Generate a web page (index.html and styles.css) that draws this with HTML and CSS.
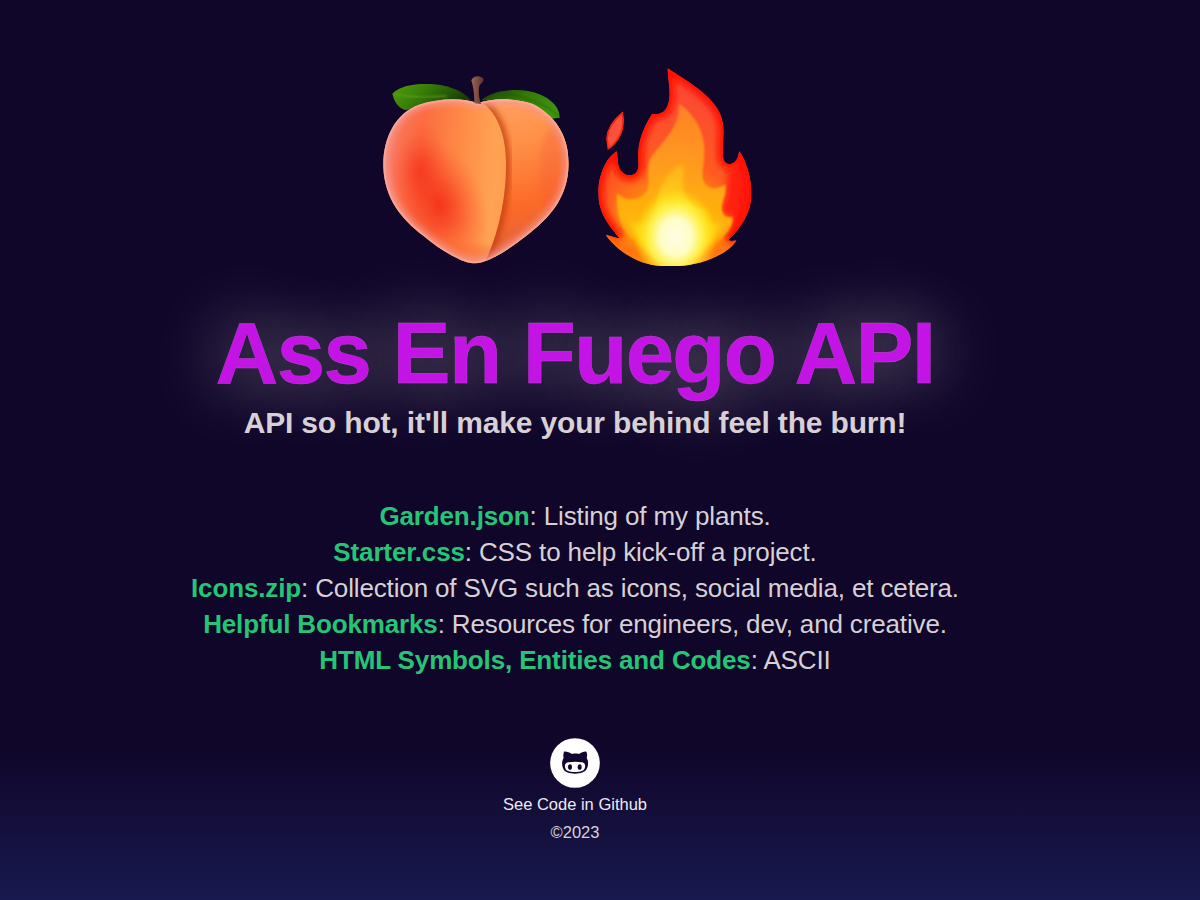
FILE: index.html
```html
<!DOCTYPE html>
<html lang="en">
<head>
<meta charset="utf-8">
<title>Ass En Fuego API</title>
<link rel="stylesheet" href="styles.css">
</head>
<body>
<main class="page">
  <svg class="hero" viewBox="0 0 1230 660" role="img" aria-label="Peach and fire">
    <defs>
      <linearGradient id="skin" x1="0" y1="0.2" x2="1" y2="0.25"><stop stop-color="#f98172"/><stop offset=".22" stop-color="#fb6c40"/><stop offset=".42" stop-color="#ff8a46"/><stop offset=".6" stop-color="#ffa353"/><stop offset="1" stop-color="#ff8442"/></linearGradient>
      <linearGradient id="cheek" x1="0" y1="0" x2="0.15" y2="1"><stop stop-color="#ffa468"/><stop offset=".35" stop-color="#ff9148"/><stop offset=".7" stop-color="#fc6a28"/><stop offset="1" stop-color="#dd6040"/></linearGradient>
      <radialGradient id="blush"><stop stop-color="#f32011" stop-opacity=".95"/><stop offset=".35" stop-color="#f5311a" stop-opacity=".7"/><stop offset=".7" stop-color="#fa4a25" stop-opacity=".35"/><stop offset="1" stop-color="#ff6433" stop-opacity="0"/></radialGradient>
      <linearGradient id="leaf" x1="0" y1="0" x2="1" y2=".35"><stop stop-color="#529c0e"/><stop offset=".4" stop-color="#398208"/><stop offset="1" stop-color="#173c08"/></linearGradient>
      <linearGradient id="leaf2" x1="0" y1="0" x2="1" y2=".5"><stop stop-color="#173e08"/><stop offset=".5" stop-color="#357806"/><stop offset="1" stop-color="#3f940c"/></linearGradient>
      <linearGradient id="stem"><stop stop-color="#9c6755"/><stop offset="1" stop-color="#5c3028"/></linearGradient>
      <radialGradient id="outer" gradientUnits="userSpaceOnUse" cx="260" cy="550" r="430"><stop stop-color="#ffc400"/><stop offset=".3" stop-color="#ff8d10"/><stop offset=".55" stop-color="#ff5a20"/><stop offset="1" stop-color="#fb4a32"/></radialGradient>
      <linearGradient id="middle" gradientUnits="userSpaceOnUse" x1="0" y1="150" x2="0" y2="620"><stop stop-color="#ff8426"/><stop offset=".35" stop-color="#ff9d20"/><stop offset=".7" stop-color="#ffb60b"/><stop offset="1" stop-color="#ff990c"/></linearGradient>
      <linearGradient id="inner" gradientUnits="userSpaceOnUse" x1="0" y1="325" x2="0" y2="630"><stop stop-color="#ffb51b"/><stop offset=".45" stop-color="#ffde20"/><stop offset="1" stop-color="#fff000"/></linearGradient>
      <radialGradient id="glow"><stop stop-color="#fffde6"/><stop offset=".38" stop-color="#fffdc4"/><stop offset=".65" stop-color="#fff550" stop-opacity=".85"/><stop offset="1" stop-color="#ffe900" stop-opacity="0"/></radialGradient>
      <filter id="soft" x="-20%" y="-20%" width="140%" height="140%"><feGaussianBlur stdDeviation="9"/></filter>
      <filter id="edge" x="-20%" y="-20%" width="140%" height="140%"><feGaussianBlur stdDeviation="3"/></filter>
      <clipPath id="peachClip"><path d="M323 130C280 112 207 114 147 134C75 160 38 236 40 320C43 418 98 479 157 525C204 565 266 604 307 610C352 612 409 573 469 527C536 475 594 416 596 311C596 222 551 164 488 132C435 113 369 114 323 130Z"/></clipPath>
      <clipPath id="cheekClip"><path d="M323 120C378 147 407 219 408 306C410 408 386 529 338 620H620V90H323Z"/></clipPath>
      <clipPath id="fireClip"><path d="M248 40C304 78 376 116 404 174C425 218 409 268 415 311C419 329 436 332 450 320C461 311 460 296 463 289C482 316 499 367 499 414C499 477 465 520 430 555C439 561 448 556 454 557C430 596 352 631 275 633H227C156 629 92 584 62 539C77 543 91 548 104 550C76 515 40 477 40 414C40 361 62 311 95 289C99 309 96 333 108 347C119 363 144 366 155 351C166 334 157 311 160 292C162 246 183 205 202 176C220 181 238 174 246 157C262 122 249 83 248 40Z"/></clipPath>
    </defs>
    <g transform="translate(0 15)">
      <path d="M67 101C94 75 138 70 192 73C246 78 282 97 302 120C247 137 159 146 105 150C83 143 72 122 67 101Z" fill="url(#leaf)"/>
      <path d="M72 102C117 113 161 114 231 108" fill="none" stroke="#68aa20" stroke-width="4" opacity=".7" filter="url(#edge)"/>
      <path d="M334 121C367 92 423 86 474 93C531 103 570 137 569 173L545 176C482 139 416 117 334 121Z" fill="url(#leaf2)"/>
      <path d="M398 101C464 108 529 133 565 168" fill="none" stroke="#194b08" stroke-width="5" opacity=".4" filter="url(#edge)"/>
      <g clip-path="url(#peachClip)">
        <rect x="30" y="100" width="580" height="520" fill="url(#skin)"/>
        <ellipse cx="205" cy="430" rx="140" ry="205" transform="rotate(-22 205 430)" fill="url(#blush)" opacity=".85"/>
        <ellipse cx="150" cy="325" rx="95" ry="150" fill="url(#blush)" opacity=".55"/>
        <ellipse cx="290" cy="600" rx="110" ry="45" fill="#f5603a" opacity=".4" filter="url(#soft)"/>
        <g clip-path="url(#cheekClip)">
          <rect x="323" y="90" width="300" height="530" fill="url(#cheek)"/>
          <ellipse cx="560" cy="330" rx="50" ry="140" fill="#f65a3c" opacity=".3" filter="url(#soft)"/>
          <path d="M323 120C378 147 407 219 408 306C410 408 386 529 338 620" fill="none" stroke="#c23a08" stroke-width="24" opacity=".85" filter="url(#soft)"/>
        </g>
        <path d="M323 130C280 112 207 114 147 134C75 160 38 236 40 320C43 418 98 479 157 525C204 565 266 604 307 610C352 612 409 573 469 527C536 475 594 416 596 311C596 222 551 164 488 132C435 113 369 114 323 130Z" fill="none" stroke="#f59a98" stroke-width="30" opacity=".75" filter="url(#soft)"/>
        <path d="M323 130C280 112 207 114 147 134C75 160 38 236 40 320C43 418 98 479 157 525C204 565 266 604 307 610C352 612 409 573 469 527C536 475 594 416 596 311C596 222 551 164 488 132C435 113 369 114 323 130Z" fill="none" stroke="#ffd0b0" stroke-width="7" opacity=".6" filter="url(#edge)"/>
      </g>
      <path d="M313 130C314 101 309 79 304 61C310 45 332 45 341 57C341 69 329 70 327 83C325 104 329 122 334 132Z" fill="url(#stem)"/>
    </g>
    <g transform="translate(645 0)">
      <g clip-path="url(#fireClip)">
        <rect width="540" height="660" fill="url(#outer)"/>
        <path d="M430 345C466 332 470 310 480 270L540 300V500L425 570C432 530 449 510 441 485C413 492 402 469 413 442C431 412 424 390 430 345Z" fill="#ff1709" opacity=".85" filter="url(#soft)"/>
        <path d="M248 40C304 78 376 116 404 174C425 218 409 268 415 311C419 329 436 332 450 320C461 311 460 296 463 289C482 316 499 367 499 414C499 477 465 520 430 555M104 550C76 515 40 477 40 414C40 361 62 311 95 289C99 309 96 333 108 347C119 363 144 366 155 351C166 334 157 311 160 292C162 246 183 205 202 176C220 181 238 174 246 157C262 122 249 83 248 40" fill="none" stroke="#ff1006" stroke-width="30" filter="url(#soft)"/>
        <path d="M97 414C120 440 158 439 181 414C199 394 185 349 191 325C204 276 286 236 282 145C324 174 360 228 358 289C359 329 345 361 359 384C374 407 404 401 421 388C426 425 404 444 412 470C418 489 434 486 443 487C444 533 393 562 363 591C320 634 218 639 184 593C133 554 86 501 97 414Z" fill="url(#middle)" opacity=".95" filter="url(#edge)"/>
        <path d="M297 323C239 352 215 420 213 466C210 508 148 514 132 487C140 550 190 612 244 635H300C352 594 402 550 412 496C386 520 367 493 361 464C343 471 310 451 296 412C288 386 295 354 297 323Z" fill="url(#inner)" opacity=".65" filter="url(#soft)"/>
        <path d="M297 323C239 352 215 420 213 466C230 500 340 500 361 464C343 471 310 451 296 412C288 386 295 354 297 323Z" fill="url(#inner)" opacity=".55" filter="url(#edge)"/>
        <path d="M62 539C117 552 187 576 235 635H180L70 570ZM455 556C392 560 332 586 298 635L370 622Z" fill="#ff6a11" opacity=".65" filter="url(#soft)"/>
        <ellipse cx="272" cy="545" rx="125" ry="145" fill="url(#glow)"/>
      </g>
      <path d="M112 174C80 201 67 227 66 251L70 281C99 262 122 223 112 174Z" fill="#ff503b" stroke="#f52514" stroke-width="5"/>
    </g>
  </svg>
  <h1 class="title">Ass En Fuego API</h1>
  <h2 class="tagline">API so hot, it'll make your behind feel the burn!</h2>
  <ul class="links">
    <li><a href="#">Garden.json</a>: Listing of my plants.</li>
    <li><a href="#">Starter.css</a>: CSS to help kick-off a project.</li>
    <li><a href="#">Icons.zip</a>: Collection of SVG such as icons, social media, et cetera.</li>
    <li><a href="#">Helpful Bookmarks</a>: Resources for engineers, dev, and creative.</li>
    <li><a href="#">HTML Symbols, Entities and Codes</a>: ASCII</li>
  </ul>
  <footer class="footer">
    <a class="github" href="#">
      <svg class="github-icon" viewBox="0 0 150 150" aria-hidden="true">
        <circle cx="75" cy="75" r="74.5" fill="#fff"/>
        <path d="M42 41C50 40 59 44 66 48C73 46 80 46 87 48C94 43 103 40 109 41C113 49 111 55 110 60C116 69 115 82 111 91C106 104 91 107 75 107C58 107 44 104 39 91C35 81 35 69 41 60C39 54 40 47 42 41Z" fill="#12062e"/>
        <path d="M59 73C68 71 83 71 92 73C103 72 107 80 105 88C103 100 92 102 75 102C58 102 47 100 45 88C43 79 49 72 59 73Z" fill="#fff"/>
        <ellipse cx="60" cy="87" rx="6" ry="8.5" fill="#12062e"/><ellipse cx="89" cy="87" rx="6" ry="8.5" fill="#12062e"/>
      </svg>
      <span class="github-label">See Code in Github</span>
    </a>
    <p class="copyright">©2023</p>
  </footer>
</main>
</body>
</html>
```
FILE: styles.css
```css
* { box-sizing: border-box; margin: 0; padding: 0; }
html { background: #18194f; }
body {
  height: 900px;
  overflow: hidden;
  font-family: "Liberation Sans", Arial, sans-serif;
  color: #d7d0d5;
  background: linear-gradient(#10062a 0, #10062a 750px, #18194f 900px) no-repeat;
}
.page {
  width: 1150px;
  padding-top: 55px;
  display: flex;
  flex-direction: column;
  align-items: center;
  text-align: center;
}
.hero { width: 410px; height: 220px; display: block; }
.title {
  margin-top: 28px;
  font-size: 87px;
  line-height: 100px;
  letter-spacing: -1.7px;
  color: #c313e5;
  -webkit-text-stroke: .4px #b84bcb;
  text-shadow: 0 0 70px rgba(245, 240, 225, .58);
  white-space: nowrap;
}
.tagline { margin-top: 2px; font-size: 30px; line-height: 36px; letter-spacing: -.16px; white-space: nowrap; }
.links {
  margin-top: 57px;
  list-style: none;
  font-size: 26px;
  line-height: 36px;
  letter-spacing: -.14px;
  white-space: nowrap;
}
.links a { color: #25c477; font-weight: 700; text-decoration: none; }
.footer { margin-top: 60px; }
.github { display: flex; flex-direction: column; align-items: center; color: #eeeaf2; text-decoration: none; }
.github-icon { width: 50px; height: 50px; }
.github-label { margin-top: 6px; font-size: 16.5px; line-height: 20px; }
.copyright { margin-top: 8px; font-size: 16.5px; line-height: 20px; }
```
